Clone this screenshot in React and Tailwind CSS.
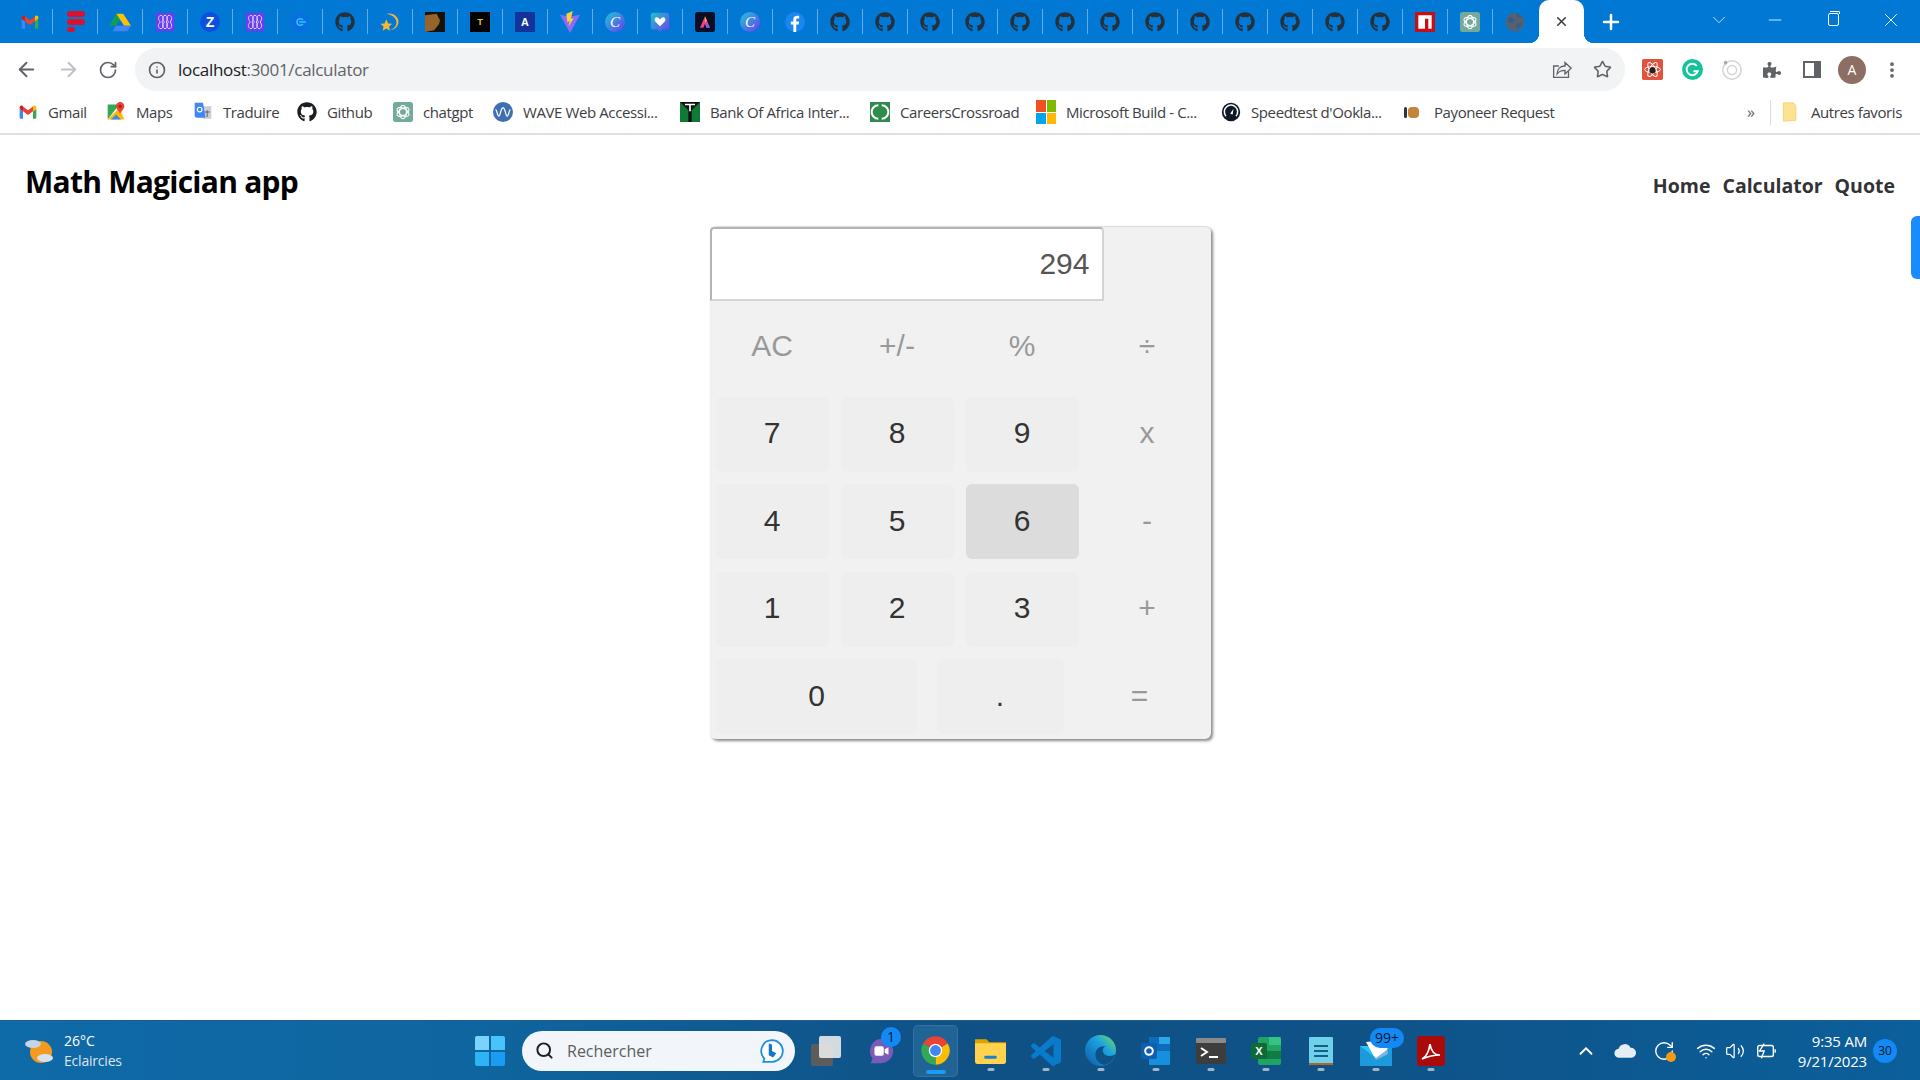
import React from 'react';
import { ArrowLeft, ArrowRight, RotateCw, Info, Star, Plus, X, Minus, ChevronDown, Search, ChevronUp, Volume2, Wifi, MoreVertical } from 'lucide-react';
import { FaGithub, FaPuzzlePiece } from 'react-icons/fa';

const ui = "font-['Open_Sans',sans-serif]";
const arial = "font-['Liberation_Sans',Arial,sans-serif]";

function Gh({ className = 'w-5 h-5 text-[#25303b]' }) {
  return <FaGithub className={className} />;
}

function Gmail({ className = 'w-5 h-5' }) {
  return (
    <svg viewBox="0 0 24 24" className={className}>
      <path fill="#4285F4" d="M2 20h4V11L2 8v10.500C2 19.300 2.700 20 3.500 20z" />
      <path fill="#34A853" d="M18 20h2.500c.8 0 1.500-.7 1.500-1.500V8l-4 3z" />
      <path fill="#EA4335" d="M6 11V5.500l6 4.500 6-4.500V11l-6 4.500z" />
      <path fill="#FBBC04" d="M18 5.500V11l4-3V6.500c0-1.900-2.100-2.900-3.600-1.800z" />
      <path fill="#C5221F" d="M2 8l4 3V5.500l-.4-.8C4.100 3.600 2 4.600 2 6.500z" />
    </svg>
  );
}

function Drive() {
  return (
    <svg viewBox="0 0 24 24" className="w-[22px] h-[22px]">
      <path fill="#0F9D58" d="M8 3h7.500L7.500 16H0z" />
      <path fill="#FFC107" d="M8 3H15.500L24 16h-7.500z" />
      <path fill="#4285F4" d="M4 22l3.500-6H24L20 22z" />
    </svg>
  );
}

function Miro() {
  return (
    <svg viewBox="0 0 24 24" className="w-5 h-5">
      <rect x="1" y="1" width="22" height="22" fill="#6a3df0" />
      <g fill="none" stroke="#e2d8ff" strokeWidth="1.200">
        <path d="M7 4c-2 0-2.800 2.500-2.800 4S6 11 6 12s-2 2.500-2 4 1 4 3 4 3-2.500 3-4-1.500-3-1.500-4S10 9.500 10 8 9 4 7 4z" />
        <path d="M12 4c-2 0-2.800 2.500-2.800 4s1.800 3 1.800 4-2 2.500-2 4 1 4 3 4 3-2.500 3-4-1.500-3-1.500-4S15 9.500 15 8s-1-4-3-4z" />
        <path d="M17 4c-2 0-2.800 2.500-2.800 4s1.800 3 1.800 4-2 2.500-2 4 1 4 3 4 3-2.500 3-4-1.500-3-1.500-4S20 9.500 20 8s-1-4-3-4z" />
      </g>
    </svg>
  );
}

function Letter({ bg, color = '#fff', children, round, size = 13 }) {
  return (
    <svg viewBox="0 0 24 24" className="w-5 h-5">
      {round ? <circle cx="12" cy="12" r="12" fill={bg} /> : <rect width="24" height="24" fill={bg} />}
      <text x="12" y="12" dy=".36em" textAnchor="middle" fontSize={size} fontWeight="700" fontFamily="Liberation Sans" fill={color}>{children}</text>
    </svg>
  );
}

function Tool() {
  return (
    <svg viewBox="0 0 24 24" className="w-5 h-5">
      <circle cx="12" cy="12" r="11" fill="#0a6fe0" />
      <path d="M15.500 9.500a4 4 0 1 0 0 5M11 12h8" fill="none" stroke="#37c2ff" strokeWidth="1.800" />
    </svg>
  );
}

function StarSwoosh() {
  return (
    <svg viewBox="0 0 24 24" className="w-[22px] h-[22px]">
      <path d="M8 3c8-2 15 4 13 11-1 4-5 7-9 7 5-2 7-5 7-9 0-4-5-8-11-9z" fill="#e8b04c" />
      <path fill="#f5b82e" d="M8 9l2 4.500 4.500.5-3.500 3 1 4.500-4-2.500-4 2.500 1-4.500-3.500-3 4.500-.5z" />
    </svg>
  );
}

function Book() {
  return (
    <svg viewBox="0 0 24 24" className="w-5 h-5">
      <rect width="24" height="24" fill="#15110d" />
      <path d="M0 4l14-2 2 4 2 4-1 4-3 4-3 4-11 2z" fill="#96632b" />
    </svg>
  );
}

function Vite() {
  return (
    <svg viewBox="0 0 24 24" className="w-[22px] h-[22px]">
      <path fill="#8b6cf6" d="M1 4l11 2 11-2-11 20z" />
      <path fill="#ffcf33" d="M15 0L8 3l1 9 2.500-1-1 6 5.500-9-3 .5z" />
    </svg>
  );
}

function Canva() {
  return (
    <svg viewBox="0 0 24 24" className="w-5 h-5">
      <defs>
        <linearGradient id="canvaFill" x1="0" y1="0" x2="1" y2="1">
          <stop offset="0" stopColor="#1fc8d8" /><stop offset="1" stopColor="#6a3df0" />
        </linearGradient>
      </defs>
      <circle cx="12" cy="12" r="12" fill="url(#canvaFill)" />
      <text x="12" y="12" dy=".36em" textAnchor="middle" fontSize="18" fontStyle="italic" fontFamily="Liberation Serif" fill="#fff">C</text>
    </svg>
  );
}

function Heart() {
  return (
    <svg viewBox="0 0 24 24" className="w-5 h-5">
      <defs>
        <linearGradient id="heartFill" x1="0" y1="0" x2="1" y2="1">
          <stop offset="0" stopColor="#14c8c8" /><stop offset="1" stopColor="#7a3df0" />
        </linearGradient>
      </defs>
      <path fill="url(#heartFill)" d="M4 1h16a3 3 0 0 1 3 3v14a3 3 0 0 1-3 3h-5l-3 3-3-3H4a3 3 0 0 1-3-3V4a3 3 0 0 1 3-3z" />
      <path fill="#fff" d="M12 17l-6-6c-2-3 2-6 4-4l2 2 2-2c2-2 6 1 4 4z" />
    </svg>
  );
}

function AdobeExpress() {
  return (
    <svg viewBox="0 0 24 24" className="w-5 h-5">
      <rect width="24" height="24" rx="3" fill="#0b0f26" />
      <path d="M12 5l6 14h-4l-2-5-2 5H6z" fill="#f0437e" />
      <path d="M12 5l2 5-2 4z" fill="#ffb32a" />
      <path d="M14 19l-2-5 1-2 5 7z" fill="#7b5cff" />
    </svg>
  );
}

function Facebook() {
  return (
    <svg viewBox="0 0 24 24" className="w-5 h-5">
      <circle cx="12" cy="12" r="12" fill="#1a86f0" />
      <path fill="#fff" d="M10 24v-9H7v-3.500h3V9c0-3 1.800-4.500 4.400-4.500 1.200 0 2.200.1 2.600.2v3h-1.800c-1.400 0-1.700.7-1.700 1.700v2.100h3.400l-.5 3.500h-2.900v9z" />
    </svg>
  );
}

function Npm() {
  return (
    <svg viewBox="0 0 24 24" className="w-5 h-5">
      <rect width="24" height="24" fill="#c80d14" />
      <path fill="#fff" d="M4 4h16v16h-4V8h-4v12H4z" />
    </svg>
  );
}

function Gpt({ className = 'w-5 h-5' }) {
  return (
    <svg viewBox="0 0 24 24" className={className}>
      <rect width="24" height="24" rx="3" fill="#74aa9c" />
      <g fill="none" stroke="#fff" strokeWidth="1.300">
        <ellipse cx="12" cy="12" rx="4.200" ry="8" />
        <ellipse cx="12" cy="12" rx="4.200" ry="8" transform="rotate(60 12 12)" />
        <ellipse cx="12" cy="12" rx="4.200" ry="8" transform="rotate(120 12 12)" />
      </g>
    </svg>
  );
}

function Globe() {
  return (
    <svg viewBox="0 0 24 24" className="w-5 h-5">
      <circle cx="12" cy="12" r="11" fill="#58606c" />
      <path d="M5 7c3-1 5 0 6 2s-1 3-3 4-3 0-4-2zM14 14c2-1 5-1 6 0-1 3-3 6-6 6-1-2-1-4 0-6zM13 2c3 0 6 2 7 4-2 1-5 1-6-1z" fill="#2f5f8a" />
    </svg>
  );
}

function Maps() {
  return (
    <svg viewBox="0 0 24 24" className="w-5 h-5">
      <path fill="#34a853" d="M2 3h14L2 21z" />
      <path fill="#fbbc04" d="M2 21L16 7l6 14z" />
      <path fill="#4285f4" d="M6 21l6-6 6 6z" />
      <path fill="#ea4335" d="M17 0a5 5 0 0 1 5 5c0 3-3 5-5 9-2-4-5-6-5-9a5 5 0 0 1 5-5z" />
      <circle cx="17" cy="5" r="1.800" fill="#a51c14" />
    </svg>
  );
}

function Translate() {
  return (
    <svg viewBox="0 0 24 24" className="w-5 h-5">
      <path fill="#c9ced6" d="M10 5h12v15H12z" />
      <path fill="#4285f4" d="M2 1h10l3 18H5a3 3 0 0 1-3-3z" />
      <circle cx="8" cy="9" r="2.800" fill="none" stroke="#fff" strokeWidth="1.300" />
      <path d="M14 12h6M17 10v8" stroke="#5f6368" strokeWidth="1.200" />
    </svg>
  );
}

function Wave() {
  return (
    <svg viewBox="0 0 24 24" className="w-5 h-5">
      <circle cx="12" cy="12" r="12" fill="#3f6fb0" />
      <path d="M3 9c2 0 2 8 4 8s2-10 5-10 3 10 5 10 2-8 4-8" fill="none" stroke="#fff" strokeWidth="1.500" />
    </svg>
  );
}

function Boa() {
  return (
    <svg viewBox="0 0 24 24" className="w-5 h-5">
      <rect width="24" height="24" fill="#0f7a35" />
      <path d="M0 0h24L14 10v14h-4V10z" fill="#111" />
      <path d="M6 2h12v2h-5v7h-2V4H6z" fill="#fff" />
    </svg>
  );
}

function Careers() {
  return (
    <svg viewBox="0 0 24 24" className="w-5 h-5">
      <rect width="24" height="24" fill="#2f8b4e" />
      <path d="M10 4a8 8 0 0 0 0 16M14 4a8 8 0 0 1 0 16" fill="none" stroke="#fff" strokeWidth="2.400" />
    </svg>
  );
}

function Microsoft() {
  return (
    <div className="grid grid-cols-2 gap-px w-5 h-[24px]">
      <span className="bg-[#f25022]" /><span className="bg-[#7fba00]" />
      <span className="bg-[#00a4ef]" /><span className="bg-[#ffb900]" />
    </div>
  );
}

function Speedtest() {
  return (
    <svg viewBox="0 0 24 24" className="w-5 h-5">
      <circle cx="12" cy="12" r="11" fill="#101828" />
      <path d="M6 17a8 8 0 1 1 12 0" fill="none" stroke="#fff" strokeWidth="1.800" />
      <path d="M11 14l4-6-1 7z" fill="#fff" />
    </svg>
  );
}

function Payoneer() {
  return (
    <div className="flex items-center gap-px w-5 h-5">
      <span className="w-[3px] h-[11px] bg-[#333] rounded-sm" />
      <span className="w-[11px] h-[11px] bg-[#c4853a] rounded-sm" />
    </div>
  );
}

function Flat() {
  return (
    <div className="flex flex-col gap-[2px] w-[18px] ml-[2px]">
      <span className="h-[6px] w-[18px] bg-[#d8112c] rounded-sm" />
      <span className="h-[6px] w-[18px] bg-[#d8112c] rounded-sm" />
      <span className="h-[5px] w-[8px] bg-[#d8112c] rounded-sm" />
    </div>
  );
}

const tabs = [
  <Gmail />, <Flat />, <Drive />, <Miro />, <Letter bg="#0f4fe0" round size={17}>Z</Letter>, <Miro />, <Tool />, <Gh />, <StarSwoosh />, <Book />,
  <Letter bg="#000" color="#f5c518" size={11}>T</Letter>, <Letter bg="#12349a">A</Letter>, <Vite />, <Canva />, <Heart />, <AdobeExpress />, <Canva />, <Facebook />,
  <Gh />, <Gh />, <Gh />, <Gh />, <Gh />, <Gh />, <Gh />, <Gh />, <Gh />, <Gh />, <Gh />, <Gh />, <Gh />, <Npm />, <Gpt />, <Globe />,
];

const bookmarks = [
  { w: 'w-[88px]', icon: <Gmail />, label: 'Gmail' },
  { w: 'w-[87px]', icon: <Maps />, label: 'Maps' },
  { w: 'w-[104px]', icon: <Translate />, label: 'Traduire' },
  { w: 'w-[96px]', icon: <FaGithub className="w-5 h-5 text-[#1b1f23]" />, label: 'Github' },
  { w: 'w-[100px]', icon: <Gpt />, label: 'chatgpt' },
  { w: 'w-[187px]', icon: <Wave />, label: 'WAVE Web Accessi...' },
  { w: 'w-[190px]', icon: <Boa />, label: 'Bank Of Africa Inter...' },
  { w: 'w-[166px]', icon: <Careers />, label: 'CareersCrossroad' },
  { w: 'w-[185px]', icon: <Microsoft />, label: 'Microsoft Build - C...' },
  { w: 'w-[183px]', icon: <Speedtest />, label: "Speedtest d'Ookla..." },
  { w: 'w-[170px]', icon: <Payoneer />, label: 'Payoneer Request' },
];

function TabStrip() {
  return (
    <div className="flex items-center h-[43px] bg-[#0078d4] pl-[7.500px]">
      {tabs.map((icon, i) => (
        <div key={i} className={`flex items-center justify-center w-[45px] h-[25px] ${i < tabs.length - 1 ? 'border-r border-[#62ade6]' : ''}`}>
          {icon}
        </div>
      ))}
      <div className="relative flex items-center justify-center w-[45px] h-[43px] ml-[1.500px] bg-white rounded-t-[10px]">
        <span className="absolute -left-[10px] bottom-0 w-[10px] h-[10px] bg-[radial-gradient(circle_at_0_0,transparent_10px,white_10.500px)]" />
        <span className="absolute -right-[10px] bottom-0 w-[10px] h-[10px] bg-[radial-gradient(circle_at_100%_0,transparent_10px,white_10.500px)]" />
        <X className="w-[15px] h-[15px] text-[#3c4043]" strokeWidth={2.500} />
      </div>
      <div className="flex items-center justify-center w-[54px]">
        <Plus className="w-6 h-6 text-white" strokeWidth={2.500} />
      </div>
      <div className="flex items-center h-[43px] ml-auto -mt-[4px] text-white">
        <div className="flex justify-center w-[54px]"><ChevronDown className="w-[22px] h-[22px] text-[#cfe6f8]" strokeWidth={1} /></div>
        <div className="flex justify-center w-[58px]"><Minus className="w-[20px] h-[20px]" strokeWidth={1} /></div>
        <div className="flex justify-center w-[58px]">
          <div className="relative w-[11px] h-[13px] border border-white rounded-[2px]">
            <span className="absolute -top-[3px] left-[1px] w-[10px] h-[3px] border-t border-r border-white rounded-tr-[2px]" />
          </div>
        </div>
        <div className="flex justify-center w-[58px]"><X className="w-[22px] h-[22px]" strokeWidth={1} /></div>
      </div>
    </div>
  );
}

function Toolbar() {
  return (
    <div className="flex items-center h-[48px] pt-[5px] bg-white">
      <div className="flex items-center justify-between w-[135px] pl-[15px] pr-[17px] text-[#5f6368]">
        <ArrowLeft className="w-[23px] h-[23px]" strokeWidth={2} />
        <ArrowRight className="w-[23px] h-[23px] text-[#bdc1c6]" strokeWidth={2} />
        <RotateCw className="w-[20px] h-[20px]" strokeWidth={2} />
      </div>
      <div className={`flex items-center w-[1490px] h-[43px] px-[13px] rounded-full bg-[#f1f3f4] ${ui}`}>
        <Info className="w-[18px] h-[18px] text-[#5f6368]" strokeWidth={2.200} />
        <span className="ml-[12px] text-[17px] text-[#5f6368] tracking-[-0.3px]"><span className="text-[#202124]">localhost</span>:3001/calculator</span>
        <div className="flex items-center gap-[21px] ml-auto text-[#5f6368]">
          <svg viewBox="0 0 24 24" className="w-[21px] h-[21px]" fill="none" stroke="currentColor" strokeWidth="1.500">
            <path d="M20 14v7H3V8h6" /><path d="M7 17c0-6 4-9 9-9V4l7 6.500-7 6.500v-4c-4 0-7 1-9 4z" />
          </svg>
          <Star className="w-[19px] h-[19px]" strokeWidth={2} />
        </div>
      </div>
      <div className="grid grid-cols-[repeat(7,40px)] justify-items-center items-center pl-[7px]">
        <svg viewBox="0 0 24 24" className="w-[21px] h-[21px]">
          <rect width="24" height="24" rx="2" fill="#e0533d" />
          <g fill="none" stroke="#fff" strokeWidth="1.100">
            <ellipse cx="12" cy="12" rx="9" ry="3.500" /><ellipse cx="12" cy="12" rx="9" ry="3.500" transform="rotate(60 12 12)" /><ellipse cx="12" cy="12" rx="9" ry="3.500" transform="rotate(120 12 12)" />
          </g>
          <circle cx="12" cy="13" r="3.500" fill="#222" />
        </svg>
        <svg viewBox="0 0 24 24" className="w-[21px] h-[21px]">
          <circle cx="12" cy="12" r="12" fill="#15c39a" />
          <path d="M17 8a6.500 6.500 0 1 0 1 6h-5" fill="none" stroke="#fff" strokeWidth="2.200" />
        </svg>
        <svg viewBox="0 0 24 24" className="w-[22px] h-[22px]" fill="none" stroke="#d3d3d3" strokeWidth="1.600">
          <circle cx="12" cy="12" r="10" /><circle cx="12" cy="12" r="5" /><circle cx="5" cy="4" r="2" fill="#aaa" stroke="none" />
        </svg>
        <FaPuzzlePiece className="w-[18px] h-[18px] text-[#5f6368]" />
        <div className="w-[18px] h-[17px] border-2 border-[#5f6368] border-r-[7px] bg-white" />
        <div className={`flex items-center justify-center w-[28px] h-[28px] rounded-full bg-[#8d6e63] text-white text-[14px] ${ui}`}>A</div>
        <MoreVertical className="w-5 h-5 text-[#5f6368]" strokeWidth={2.500} />
      </div>
    </div>
  );
}

function BookmarksBar() {
  return (
    <div className={`flex items-center h-[44px] pl-[18px] bg-white border-b-2 border-[#e0e0e0] text-[15px] text-[#3c4043] ${ui}`}>
      {bookmarks.map((b) => (
        <div key={b.label} className={`flex items-center gap-[10px] ${b.w}`}>
          <span className="shrink-0">{b.icon}</span>
          <span className="whitespace-nowrap tracking-[-0.4px]">{b.label}</span>
        </div>
      ))}
      <span className="ml-[173px] text-[#5f6368] text-[16px]">»</span>
      <span className="ml-[15px] h-[25px] border-l border-[#dadce0]" />
      <svg viewBox="0 0 24 24" className="w-5 h-5 ml-[9px]">
        <path fill="#fde293" stroke="#f5cf6a" d="M4 1h12l3 3v18l-15 1z" />
      </svg>
      <span className="ml-[11px] whitespace-nowrap tracking-[-0.4px]">Autres favoris</span>
    </div>
  );
}

function Header() {
  return (
    <header className={`flex items-start justify-between h-[91px] px-[25px] ${ui}`}>
      <h1 className="pt-[24px] text-[30px] font-bold leading-[46px] text-black tracking-[-0.75px]">Math Magician app</h1>
      <nav className="flex gap-[12px] pt-[34px] text-[19.500px] font-bold leading-[34px] text-[#333]">
        <a>Home</a>
        <a>Calculator</a>
        <a>Quote</a>
      </nav>
    </header>
  );
}

const rows = [
  { keys: ['7', '8', '9', 'x'], pad: 'pb-[4px]' },
  { keys: ['4', '5', '6', '-'], pad: 'pb-[2px]' },
  { keys: ['1', '2', '3', '+'], pad: 'pb-[4px]' },
];

function Key({ label, bg = 'bg-[#eeeeee]', pad = 'pb-[2px]' }) {
  return <button className={`flex items-center justify-center h-[75px] rounded-[6px] text-[#333] ${bg} ${pad}`}>{label}</button>;
}

function Op({ label, pad = 'pb-[2px]' }) {
  return <button className={`flex items-center justify-center h-[75px] text-[#999] ${pad}`}>{label}</button>;
}

function Calculator() {
  return (
    <div className={`w-[501px] h-[513px] mx-auto rounded-[6px] bg-[#f1f1f1] border-t border-[#dcdcdc] shadow-[2px_2px_3px_#8a8a8a] text-[30px] ${arial}`}>
      <div className="flex items-center justify-end w-[394px] h-[74px] pr-[12px] pb-[2px] bg-white border-2 border-t-[#b4b4b4] border-l-[#b4b4b4] border-r-[#d4d4d4] border-b-[#d4d4d4] rounded-t-[4px] text-[#555]">294</div>
      <div className="flex flex-col gap-y-[12.500px] px-[6px] pt-[8px]">
        <div className="grid grid-cols-[113px_113px_113px_113px] gap-x-[12px]">
          <Op label="AC" />
          <Op label="+/-" />
          <Op label="%" />
          <Op label="÷" />
        </div>
        {rows.map(({ keys, pad }) => (
          <div key={keys[0]} className="grid grid-cols-[113px_113px_113px_113px] gap-x-[12px]">
            <Key label={keys[0]} pad={pad} />
            <Key label={keys[1]} pad={pad} />
            <Key label={keys[2]} pad={pad} bg={keys[2] === '6' ? 'bg-[#dcdcdc]' : 'bg-[#eeeeee]'} />
            <Op label={keys[3]} pad={pad} />
          </div>
        ))}
        <div className="grid grid-cols-[202px_127px_114px] gap-x-[19px]">
          <Key label="0" />
          <Key label="." />
          <Op label="=" />
        </div>
      </div>
    </div>
  );
}

function Dot() {
  return <span className="absolute bottom-[6px] left-1/2 -translate-x-1/2 w-[7px] h-[3px] rounded-full bg-[#9fb6c9]" />;
}

function Badge({ children, className = '' }) {
  return <span className={`absolute flex items-center justify-center rounded-full bg-[#1289f5] text-[#0b1a2a] text-[14px] ${className}`}>{children}</span>;
}

function TaskIcon({ children, running, active, badge }) {
  return (
    <div className={`relative flex items-center justify-center w-[45px] h-[52px] rounded-[5px] ${active ? 'bg-[#2c6f9f]/60 border border-[#3a7aa8]/70' : ''}`}>
      {children}
      {running && <Dot />}
      {active && <span className="absolute bottom-[2px] left-1/2 -translate-x-1/2 w-[20px] h-[4px] rounded-full bg-[#1a9bf5]" />}
      {badge}
    </div>
  );
}

function Taskbar() {
  return (
    <div className={`flex items-center shrink-0 h-[60px] border-t border-[#1e5e8f] bg-[linear-gradient(90deg,#0f6aa8_0%,#0f659f_25%,#0f5185_50%,#0f5287_70%,#0b5f9b_100%)] text-white ${ui}`}>
      <div className="flex items-center gap-[8px] w-[475px] pl-[24px]">
        <svg viewBox="0 0 32 32" className="w-[32px] h-[32px]">
          <circle cx="17" cy="17" r="11" fill="#f39a1f" />
          <ellipse cx="9" cy="9" rx="8" ry="4" fill="#c6d4e6" />
          <ellipse cx="21" cy="23" rx="8" ry="4" fill="#d8e2ee" />
        </svg>
        <div className="text-[14px] leading-[20px]">
          <div>26°C</div>
          <div className="text-[#dbe8f3] tracking-[-0.2px]">Eclaircies</div>
        </div>
      </div>
      <div className="grid grid-cols-2 gap-[2px] w-[30px] h-[30px]">
        <span className="rounded-tl-[2px] bg-[#7ad3fb]" /><span className="rounded-tr-[2px] bg-[#49c3fb]" />
        <span className="rounded-bl-[2px] bg-[#2fb3f7]" /><span className="rounded-br-[2px] bg-[#1a9cf5]" />
      </div>
      <div className="flex items-center w-[273px] h-[40px] ml-[17px] pl-[13px] pr-[10px] rounded-full bg-[#f2f5f9] text-[#5d5d5d] text-[16px]">
        <Search className="w-[19px] h-[19px] text-[#202020]" strokeWidth={2.500} />
        <span className="ml-[13px]">Rechercher</span>
        <svg viewBox="0 0 24 24" className="w-[26px] h-[26px] ml-auto">
          <path fill="#fff" stroke="#1a8fe0" strokeWidth="1.600" d="M12 2a10 10 0 0 1 10 10 10 10 0 0 1-10 10H4l1-3a10 10 0 0 1 7-17z" />
          <path fill="#1577c9" d="M9 5l3 1v6l4 2-3 4-4-2z" />
        </svg>
      </div>
      <div className="flex items-center gap-[10px] ml-[8px]">
        <TaskIcon>
          <div className="relative w-[30px] h-[30px]">
            <span className="absolute left-0 bottom-0 w-[22px] h-[22px] rounded-[2px] bg-[#5c5c5c]" />
            <span className="absolute right-0 top-0 w-[22px] h-[22px] rounded-[2px] bg-[#e9e9e9]/90" />
          </div>
        </TaskIcon>
        <TaskIcon badge={<Badge className="top-[2px] right-[2px] w-[20px] h-[20px]">1</Badge>}>
          <svg viewBox="0 0 30 30" className="w-[28px] h-[28px]">
            <path fill="#7b5bb8" d="M15 2a13 13 0 0 1 0 26H4l2-5A13 13 0 0 1 15 2z" />
            <rect x="8" y="10" width="10" height="10" rx="2" fill="#fff" /><path fill="#fff" d="M19 13l4-2v8l-4-2z" />
          </svg>
        </TaskIcon>
        <TaskIcon active>
          <svg viewBox="0 0 24 24" className="w-[31px] h-[31px]">
            <path fill="#ea4335" d="M12 12L2.470 6.500A11 11 0 0 1 21.530 6.500Z" />
            <path fill="#fbbc04" d="M12 12L21.530 6.500A11 11 0 0 1 12 23Z" />
            <path fill="#34a853" d="M12 12L12 23A11 11 0 0 1 2.470 6.500Z" />
            <circle cx="12" cy="12" r="5.200" fill="#fff" /><circle cx="12" cy="12" r="4.200" fill="#4285f4" />
          </svg>
        </TaskIcon>
        <TaskIcon running>
          <svg viewBox="0 0 30 26" className="w-[31px] h-[27px]">
            <path fill="#e0a100" d="M0 2h11l3 3h16v8H0z" />
            <path fill="#ffd34d" d="M0 6h30v18a2 2 0 0 1-2 2H2a2 2 0 0 1-2-2z" />
            <rect x="9" y="18" width="12" height="3" rx="1" fill="#1a7fd0" />
          </svg>
        </TaskIcon>
        <TaskIcon running>
          <svg viewBox="0 0 24 24" className="w-[30px] h-[30px]">
            <path fill="#0a7acb" d="M23.150 2.587L18.210.21a1.494 1.494 0 0 0-1.705.29l-9.460 8.630-4.120-3.128a.999.999 0 0 0-1.276.057L.327 7.261A1 1 0 0 0 .326 8.740L3.899 12 .326 15.260a1 1 0 0 0 .001 1.479L1.650 17.940a.999.999 0 0 0 1.276.057l4.120-3.128 9.460 8.630a1.492 1.492 0 0 0 1.704.29l4.942-2.377A1.500 1.500 0 0 0 24 20.060V3.939a1.500 1.500 0 0 0-.85-1.352zm-5.146 14.861L10.826 12l7.178-5.448v10.896z" />
          </svg>
        </TaskIcon>
        <TaskIcon running>
          <svg viewBox="0 0 30 30" className="w-[31px] h-[31px]">
            <defs>
              <linearGradient id="edgeFill" x1="0" y1="1" x2="1" y2="0">
                <stop offset="0" stopColor="#0c59a4" /><stop offset=".6" stopColor="#1ba0e2" /><stop offset="1" stopColor="#6ee05a" />
              </linearGradient>
            </defs>
            <circle cx="15" cy="15" r="15" fill="url(#edgeFill)" />
            <path fill="#0f5185" d="M30 18c-3 3-8 3-11 1-3-3-2-7 1-8-5-1-10 2-10 8 0 5 4 9 9 10 5-1 9-5 11-11z" />
          </svg>
        </TaskIcon>
        <TaskIcon running>
          <svg viewBox="0 0 30 30" className="w-[30px] h-[30px]">
            <rect x="8" y="1" width="21" height="14" fill="#0f6cbd" />
            <path fill="#28a8ea" d="M18 1h11v7H18z" /><path fill="#1490df" d="M8 15h21v13a1 1 0 0 1-1 1H8z" />
            <rect x="0" y="7" width="16" height="16" rx="2" fill="#0f5fb0" />
            <circle cx="8" cy="15" r="3.800" fill="none" stroke="#fff" strokeWidth="2" />
          </svg>
        </TaskIcon>
        <TaskIcon running>
          <svg viewBox="0 0 30 26" className="w-[30px] h-[26px]">
            <rect width="30" height="26" rx="2" fill="#3d3d3d" />
            <rect width="30" height="5" rx="1" fill="#8a8a8a" />
            <path d="M5 10l6 4-6 4" fill="none" stroke="#fff" strokeWidth="2" /><path d="M13 19h9" stroke="#fff" strokeWidth="2" />
          </svg>
        </TaskIcon>
        <TaskIcon running>
          <svg viewBox="0 0 30 30" className="w-[30px] h-[30px]">
            <rect x="7" y="1" width="23" height="28" rx="2" fill="#21a366" />
            <path fill="#33c481" d="M18 1h10a2 2 0 0 1 2 2v6H18z" /><path fill="#107c41" d="M7 15h23v8H7z" />
            <rect x="0" y="7" width="16" height="16" rx="2" fill="#0e6b38" />
            <text x="8" y="15" dy=".36em" textAnchor="middle" fontSize="11" fontWeight="700" fontFamily="Liberation Sans" fill="#fff">X</text>
          </svg>
        </TaskIcon>
        <TaskIcon running>
          <svg viewBox="0 0 24 30" className="w-[24px] h-[30px]">
            <rect y="1" width="24" height="28" rx="1" fill="#6fd0e8" />
            <path d="M0 27h24v1a1 1 0 0 1-1 1H1a1 1 0 0 1-1-1z" fill="#b5651d" />
            <path d="M5 10h14M5 15h14M5 20h14" stroke="#14608a" strokeWidth="2.200" />
          </svg>
        </TaskIcon>
        <TaskIcon running badge={<Badge className="top-[3px] -right-[6px] w-[34px] h-[20px] text-[14px]">99+</Badge>}>
          <svg viewBox="0 0 32 30" className="w-[32px] h-[30px]">
            <path fill="#2fc3f2" d="M0 10h32v20H0z" />
            <path fill="#fff" d="M6 6l20-2 2 14-12 6z" />
            <path fill="#0f78c9" d="M0 10l16 12 16-12v20H0z" opacity=".55" />
          </svg>
        </TaskIcon>
        <TaskIcon running>
          <svg viewBox="0 0 28 30" className="w-[28px] h-[30px]">
            <rect width="28" height="30" rx="3" fill="#aa0a0a" />
            <path d="M5 23c4-2 7-8 8-15 1 7 4 11 10 11-6 0-11 1-18 4z" fill="none" stroke="#fff" strokeWidth="1.700" />
          </svg>
        </TaskIcon>
      </div>
      <div className="flex items-center ml-auto">
        <ChevronUp className="w-[22px] h-[22px] mr-[17px]" strokeWidth={2} />
        <svg viewBox="0 0 24 16" className="w-[22px] h-[15px] mr-[17px]">
          <path fill="#e6edf3" d="M6 16a5 5 0 0 1-1-10 7 7 0 0 1 13-1 5.500 5.500 0 0 1 1 11z" />
        </svg>
        <div className="relative w-[22px] h-[22px] mr-[21px]">
          <RotateCw className="w-[22px] h-[22px]" strokeWidth={1.500} />
          <span className="absolute -right-[1px] bottom-0 w-[10px] h-[10px] rounded-full bg-[#f59a12]" />
        </div>
        <Wifi className="w-[20px] h-[20px] mr-[9px]" strokeWidth={1.800} />
        <Volume2 className="w-[20px] h-[20px] mr-[10px]" strokeWidth={1.500} />
        <svg viewBox="0 0 24 16" className="w-[22px] h-[16px]" fill="none" stroke="#fff" strokeWidth="1.500">
          <rect x="3" y="2" width="17" height="12" rx="2" /><path d="M22 6v4" /><path d="M10 0L5 8h5l-3 8" />
        </svg>
        <div className="ml-[21px] text-right text-[15px] leading-[20px] tracking-[-0.2px]">
          <div>9:35 AM</div>
          <div>9/21/2023</div>
        </div>
        <span className="flex items-center justify-center w-[24px] h-[24px] ml-[6px] mr-[23px] rounded-full bg-[#1289f5] text-[#0b1a2a] text-[12px]">30</span>
      </div>
    </div>
  );
}

export default function App() {
  return (
    <div className="relative flex flex-col h-screen overflow-hidden bg-white">
      <TabStrip />
      <Toolbar />
      <BookmarksBar />
      <main className="flex-1">
        <Header />
        <Calculator />
      </main>
      <span className="absolute right-0 top-[216px] w-[9px] h-[63px] rounded-l-[6px] bg-[#1a8cff]" />
      <Taskbar />
    </div>
  );
}
